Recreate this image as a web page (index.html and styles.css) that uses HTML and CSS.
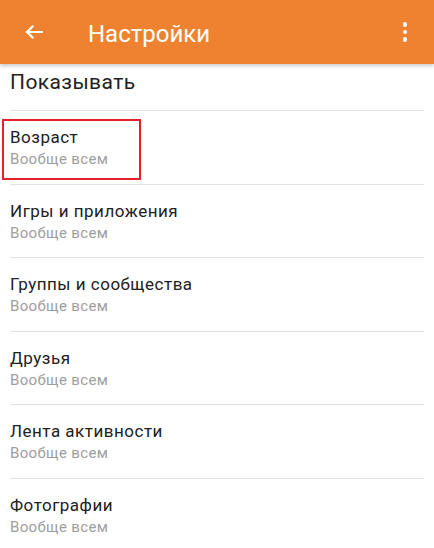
FILE: index.html
```html
<!DOCTYPE html>
<html lang="ru">
<head>
  <meta charset="UTF-8">
  <meta name="viewport" content="width=device-width, initial-scale=1.0">
  <title>Настройки</title>
  <link rel="stylesheet" href="styles.css">
</head>
<body>
  <!-- toolbar -->
  <div class="toolbar">
    <svg class="back" width="18" height="14" viewBox="0 0 18 14">
      <path d="M17 7H2M7.5 1.5L2 7l5.5 5.5" fill="none" stroke="#fff" stroke-width="2.2" stroke-linecap="square"/>
    </svg>
    <span class="toolbar-title">Настройки</span>
    <div class="menu-dots">
      <span></span><span></span><span></span>
    </div>
  </div>

  <div class="section-title">Показывать</div>

  <!-- settings list -->
  <div class="list">
    <div class="item">
      <div class="item-title">Возраст</div>
      <div class="item-sub">Вообще всем</div>
      <div class="highlight"></div>
    </div>
    <div class="item">
      <div class="item-title">Игры и приложения</div>
      <div class="item-sub">Вообще всем</div>
    </div>
    <div class="item">
      <div class="item-title">Группы и сообщества</div>
      <div class="item-sub">Вообще всем</div>
    </div>
    <div class="item">
      <div class="item-title">Друзья</div>
      <div class="item-sub">Вообще всем</div>
    </div>
    <div class="item">
      <div class="item-title">Лента активности</div>
      <div class="item-sub">Вообще всем</div>
    </div>
    <div class="item">
      <div class="item-title">Фотографии</div>
      <div class="item-sub">Вообще всем</div>
    </div>
  </div>
</body>
</html>
```
FILE: styles.css
```css
body {
  margin: 0;
  overflow: hidden;
  background-color: #fff;
  font-family: Roboto, "Noto Sans", Arial, sans-serif;
  color: #212121;
}

.toolbar {
  height: 64px;
  background-color: #ee8230;
  display: flex;
  align-items: center;
  box-shadow: 0 2px 4px rgba(0, 0, 0, 0.22);
  position: relative;
  z-index: 2;
}

.back {
  margin-left: 25px;
}

.toolbar-title {
  margin-left: 45px;
  margin-top: 3px;
  font-size: 24px;
  line-height: 28px;
  color: #fff;
}

.menu-dots {
  margin-left: auto;
  margin-right: 27px;
  display: flex;
  flex-direction: column;
  gap: 3px;
}

.menu-dots span {
  width: 4.5px;
  height: 4.5px;
  border-radius: 50%;
  background-color: #fff;
}

.section-title {
  height: 46px;
  box-sizing: border-box;
  padding: 6px 10px 0;
  font-size: 21px;
  line-height: 25px;
  letter-spacing: 0.4px;
}

.list {
  margin: 0 10px;
}

.item {
  position: relative;
  height: 73.6px;
  box-sizing: border-box;
  border-top: 1px solid #e2e2e2;
  padding-top: 16px;
}

.item-title {
  font-size: 17px;
  line-height: 21px;
  letter-spacing: 0.5px;
}

.item-sub {
  margin-top: 1px;
  font-size: 15px;
  line-height: 20px;
  letter-spacing: 0.35px;
  color: #9e9e9e;
}

/* red annotation frame */
.highlight {
  position: absolute;
  top: 8px;
  left: -8px;
  width: 139px;
  height: 61px;
  box-sizing: border-box;
  border: 2px solid #e5202a;
}
```
